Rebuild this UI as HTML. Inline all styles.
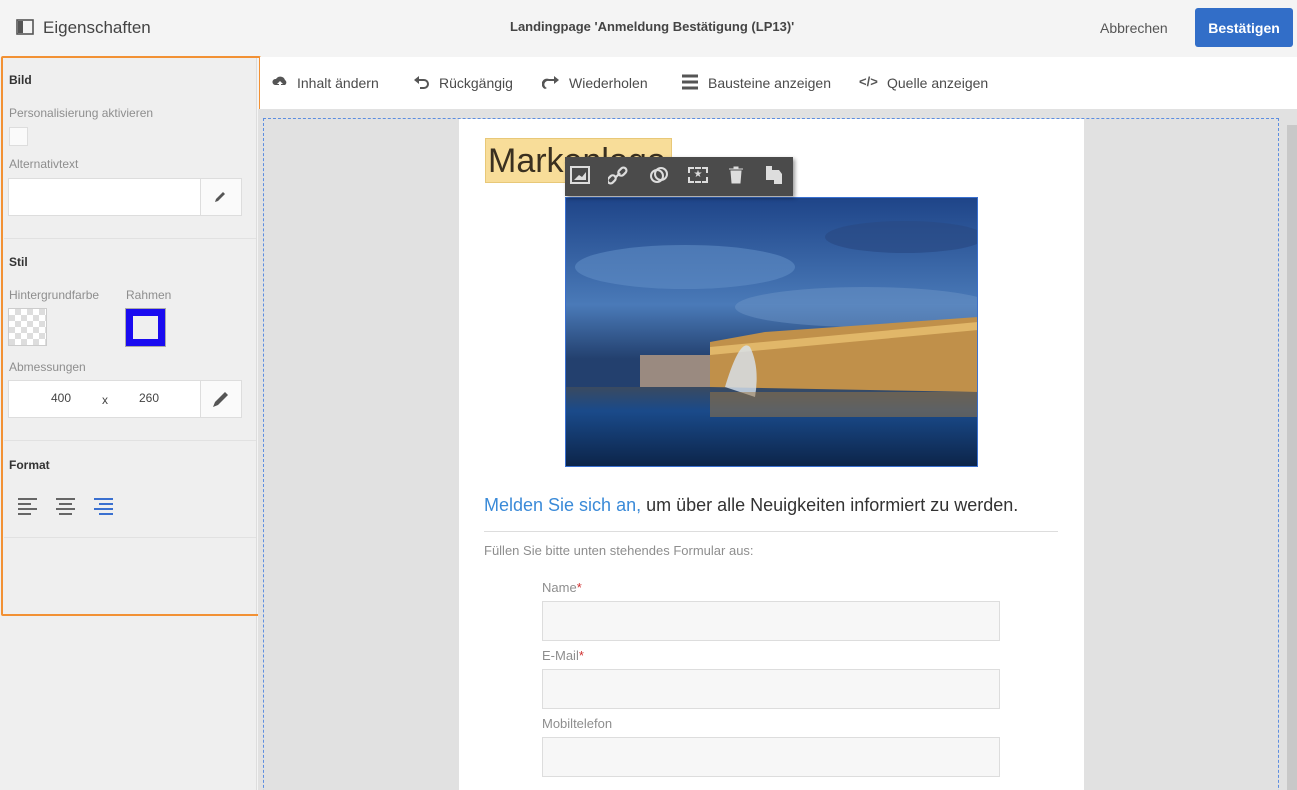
<!DOCTYPE html>
<html style="overflow:hidden"><head><meta charset="utf-8"><style>
*{box-sizing:border-box;margin:0;padding:0}
body{width:1297px;height:790px;overflow:hidden;background:#f4f4f4;font-family:"Liberation Sans",sans-serif;position:relative;color:#4b4b4b}
.abs{position:absolute}
.lbl{position:absolute;left:9px;font-size:12px;color:#8e8e8e}
.h{position:absolute;left:9px;font-size:12px;font-weight:bold;color:#333}
.sep{position:absolute;left:4px;width:252px;height:1px;background:#e1e1e1}
.tb{position:absolute;top:75px;font-size:14px;color:#4b4b4b}
.field{position:absolute;left:542px;width:458px;height:40px;border:1px solid #ddd;background:#f7f7f7}
.flbl{position:absolute;left:542px;font-size:13px;color:#8e8e8e}
</style></head><body>
<svg class="abs" style="left:16px;top:19px" width="18" height="16"><rect x="1" y="1" width="16" height="14" fill="none" stroke="#555" stroke-width="1.6"/><rect x="2" y="2" width="5" height="12" fill="#555"/></svg>
<div class="abs" style="left:43px;top:18px;font-size:17px;color:#444">Eigenschaften</div>
<div class="abs" style="left:510px;top:19px;font-size:13px;font-weight:bold;color:#444">Landingpage 'Anmeldung Bestätigung (LP13)'</div>
<div class="abs" style="left:1100px;top:20px;font-size:14px;color:#555">Abbrechen</div>
<div class="abs" style="left:1195px;top:8px;width:98px;height:39px;background:#326ec8;border-radius:3px;color:#fff;font-size:14px;font-weight:bold;display:flex;align-items:center;justify-content:center">Bestätigen</div>

<div class="abs" style="left:0;top:57px;width:257px;height:733px;background:#efefef;border-right:1px solid #ddd"></div>
<div class="abs" style="left:1px;top:56px;width:260px;height:560px;border:2px solid #f29134;border-radius:2px"></div>
<div class="h" style="top:73px">Bild</div>
<div class="lbl" style="top:106px">Personalisierung aktivieren</div>
<div class="abs" style="left:9px;top:127px;width:19px;height:19px;border:1px solid #ddd;background:#fafafa"></div>
<div class="lbl" style="top:157px">Alternativtext</div>
<div class="abs" style="left:8px;top:178px;width:234px;height:38px;background:#fff;border:1px solid #ddd"></div>
<div class="abs" style="left:200px;top:179px;width:41px;height:36px;background:#fafafa;border-left:1px solid #ddd"></div>
<svg class="abs" style="left:213px;top:190px" width="14" height="14"><path d="M2 12 L3 9 L10 2 L12 4 L5 11 Z" fill="#555"/></svg>
<div class="sep" style="top:238px"></div>
<div class="h" style="top:255px">Stil</div>
<div class="lbl" style="top:288px">Hintergrundfarbe</div>
<div class="lbl" style="left:126px;top:288px">Rahmen</div>
<div class="abs" style="left:8px;top:308px;width:39px;height:38px;border:1px solid #ccc;background-color:#fff;background-image:linear-gradient(45deg,#ddd 25%,transparent 25%,transparent 75%,#ddd 75%),linear-gradient(45deg,#ddd 25%,transparent 25%,transparent 75%,#ddd 75%);background-size:12px 12px;background-position:0 0,6px 6px"></div>
<div class="abs" style="left:126px;top:309px;width:39px;height:37px;border:7px solid #1a0bf0;outline:1px solid #aaa;background:#efefef"></div>
<div class="lbl" style="top:360px">Abmessungen</div>
<div class="abs" style="left:8px;top:380px;width:234px;height:38px;background:#fff;border:1px solid #ddd"></div>
<div class="abs" style="left:200px;top:381px;width:41px;height:36px;background:#fafafa;border-left:1px solid #ddd"></div>
<svg class="abs" style="left:211px;top:389px" width="20" height="20"><path d="M2 18 L4 13 L14 3 L17 6 L7 16 Z" fill="#555"/></svg>
<div class="abs" style="left:51px;top:391px;font-size:12px;color:#444">400</div>
<div class="abs" style="left:102px;top:393px;font-size:12px;color:#444">x</div>
<div class="abs" style="left:139px;top:391px;font-size:12px;color:#444">260</div>
<div class="sep" style="top:440px"></div>
<div class="h" style="top:458px">Format</div>
<svg class="abs" style="left:18px;top:497px" width="100" height="18">
<g stroke="#666" stroke-width="2"><path d="M0 2H19M0 7H13M0 12H19M0 17H13"/><path d="M38 2H57M41 7H54M38 12H57M41 17H54"/></g>
<g stroke="#3a70d0" stroke-width="2"><path d="M76 2H95M81 7H95M76 12H95M81 17H95"/></g></svg>
<div class="sep" style="top:537px"></div>

<div class="abs" style="left:260px;top:57px;width:1037px;height:52px;background:#fff"></div>
<svg class="abs" style="left:272px;top:74px" width="16" height="16"><path d="M3 11 A3 3 0 0 1 4 5 A5 5 0 0 1 13 6 A3 3 0 0 1 13 11 Z" fill="#555"/><path d="M8 7 L5 10 H7 V14 H9 V10 H11 Z" fill="#fff"/></svg>
<div class="tb" style="left:297px">Inhalt ändern</div>
<svg class="abs" style="left:413px;top:74px" width="18" height="16"><path d="M6 2 L1 6 L6 10 V7 H11 A3 3 0 0 1 11 13 H7 V15 H11 A5 5 0 0 0 11 5 H6 Z" fill="#555"/></svg>
<div class="tb" style="left:439px">Rückgängig</div>
<svg class="abs" style="left:542px;top:74px" width="18" height="16"><path d="M12 2 L17 6 L12 10 V7 H7 A3 3 0 0 0 5 14 L3 15 A5 5 0 0 1 7 5 H12 Z" fill="#555"/></svg>
<div class="tb" style="left:569px">Wiederholen</div>
<svg class="abs" style="left:681px;top:74px" width="18" height="16"><path d="M1 2H17M1 8H17M1 14H17" stroke="#555" stroke-width="3"/></svg>
<div class="tb" style="left:708px">Bausteine anzeigen</div>
<div class="abs" style="left:859px;top:74px;font-size:13px;font-weight:bold;color:#555">&lt;/&gt;</div>
<div class="tb" style="left:887px">Quelle anzeigen</div>

<div class="abs" style="left:258px;top:109px;width:1039px;height:681px;background:#e1e1e1"></div>
<div class="abs" style="left:263px;top:118px;width:1016px;height:700px;border:1px dashed #5d8ee0"></div>
<div class="abs" style="left:1287px;top:125px;width:10px;height:665px;background:#c8c8c8"></div>
<div class="abs" style="left:459px;top:119px;width:625px;height:671px;background:#fff"></div>
<div class="abs" style="left:485px;top:138px;width:187px;height:45px;background:#f8dd99;border:1px solid #e8c878;font-size:34px;color:#3a3020;padding-left:2px;line-height:44px">Markenlogo</div>
<svg class="abs" style="left:565px;top:197px" width="413" height="270" viewBox="0 0 413 270">
<defs><linearGradient id="sky" x1="0" y1="0" x2="0" y2="1"><stop offset="0" stop-color="#1e4488"/><stop offset="0.4" stop-color="#4a7ab8"/><stop offset="0.6" stop-color="#23406e"/></linearGradient>
<linearGradient id="wat" x1="0" y1="0" x2="0" y2="1"><stop offset="0" stop-color="#3a4a60"/><stop offset="0.3" stop-color="#1a4a8a"/><stop offset="1" stop-color="#0c2448"/></linearGradient></defs>
<rect width="413" height="270" fill="url(#sky)"/>
<ellipse cx="120" cy="70" rx="110" ry="22" fill="#5f8cc4" opacity=".6"/>
<ellipse cx="300" cy="110" rx="130" ry="20" fill="#6b93c6" opacity=".5"/>
<ellipse cx="340" cy="40" rx="80" ry="16" fill="#2a4a85" opacity=".7"/>
<rect y="190" width="413" height="80" fill="url(#wat)"/>
<path d="M145 190 V145 L200 135 L413 120 V195 Z" fill="#c0904a"/>
<path d="M145 150 L413 125 V133 L145 158 Z" fill="#e8c070" opacity=".8"/>
<path d="M75 190 V158 H145 V190Z" fill="#9a8a80"/>
<path d="M160 190 Q175 140 185 150 Q195 170 190 200 Z" fill="#d8e4f0" opacity=".8"/>
<rect x="145" y="195" width="268" height="25" fill="#a07840" opacity=".5"/>
</svg>
<div class="abs" style="left:565px;top:197px;width:413px;height:270px;border:1px solid #3a70d0"></div>
<div class="abs" style="left:565px;top:157px;width:228px;height:39px;background:#4b4b4b;box-shadow:2px 2px 4px rgba(0,0,0,.4)"></div>
<svg class="abs" style="left:570px;top:166px" width="20" height="18"><rect x="1" y="1" width="18" height="16" fill="none" stroke="#ddd" stroke-width="2"/><path d="M4 14 L9 9 L12 11 L16 6 V14Z" fill="#ddd"/></svg>
<svg class="abs" style="left:608px;top:166px" width="20" height="20"><g fill="none" stroke="#ddd" stroke-width="2.2"><rect x="1" y="9" width="6" height="9" rx="3" transform="rotate(45 4 13)"/><rect x="11" y="1" width="6" height="9" rx="3" transform="rotate(45 14 6)"/><path d="M7 12 L12 7"/></g></svg>
<svg class="abs" style="left:649px;top:166px" width="20" height="18"><circle cx="8" cy="10" r="6" fill="none" stroke="#ddd" stroke-width="2"/><circle cx="12" cy="8" r="6" fill="none" stroke="#ddd" stroke-width="2"/></svg>
<div class="abs" style="left:688px;top:167px;width:20px;height:16px;border:2px dashed #ddd;color:#ddd;font-size:10px;text-align:center;line-height:12px">★</div>
<svg class="abs" style="left:727px;top:165px" width="18" height="20"><path d="M2 4H16M7 4V2H11V4M4 6H14L13 18H5Z" fill="#ddd" stroke="#ddd"/></svg>
<svg class="abs" style="left:765px;top:165px" width="18" height="20"><path d="M1 1H7V5H11V15H1Z M9 5 H14 L17 9 V19 H9Z" fill="#ddd"/></svg>
<div class="abs" style="left:484px;top:495px;font-size:18px;color:#333"><span style="color:#3a8ad8">Melden Sie sich an,</span> um über alle Neuigkeiten informiert zu werden.</div>
<div class="abs" style="left:484px;top:531px;width:574px;height:1px;background:#ddd"></div>
<div class="abs" style="left:484px;top:543px;font-size:13px;color:#8e8e8e">Füllen Sie bitte unten stehendes Formular aus:</div>
<div class="flbl" style="top:580px">Name<span style="color:#d03030">*</span></div>
<div class="field" style="top:601px"></div>
<div class="flbl" style="top:648px">E-Mail<span style="color:#d03030">*</span></div>
<div class="field" style="top:669px"></div>
<div class="flbl" style="top:716px">Mobiltelefon</div>
<div class="field" style="top:737px"></div>
</body></html>
